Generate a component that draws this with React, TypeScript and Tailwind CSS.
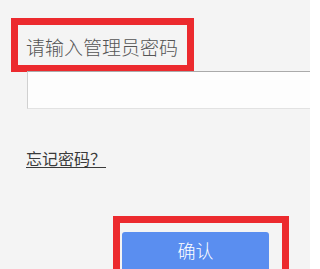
import React from 'react';

const App: React.FC = () => {
  return (
    <div
      className="w-[310px] h-[269px] overflow-hidden bg-[#f4f4f4]"
      style={{ fontFamily: '"Noto Sans CJK SC", "Noto Sans", sans-serif' }}
    >
      {/* Password label */}
      <div className="pt-[18px] pl-[11px]">
        <div className="w-[183px] h-[54px] border-[7px] border-[#ec2a2e] pl-[8px] pt-[11px]">
          <span className="block text-[19px] leading-[22px] font-light text-[#555]">请输入管理员密码</span>
        </div>
      </div>

      {/* Password input */}
      <div className="ml-[27px] -mt-[1px] h-[38px] bg-[#fdfdfd] border-t border-t-[#aaa] border-l border-l-[#d0d0d0] border-b border-b-[#e2e2e2]" />

      {/* Forgot link */}
      <div className="mt-[37px] pl-[26px]">
        <a className="text-[16px] leading-[20px] text-[#3a3a3a] underline underline-offset-2">忘记密码？</a>
      </div>

      {/* Confirm button */}
      <div className="mt-[46px] ml-[113px] w-[176px] h-[70px] border-[7px] border-b-0 border-[#ec2a2e] pl-[2px] pt-[9px]">
        <button className="w-[147px] h-[40px] rounded-[3px] bg-[#5a8ef0] text-white text-[18px] leading-[24px] font-light pb-[5px]">
          确认
        </button>
      </div>
    </div>
  );
};

export default App;
